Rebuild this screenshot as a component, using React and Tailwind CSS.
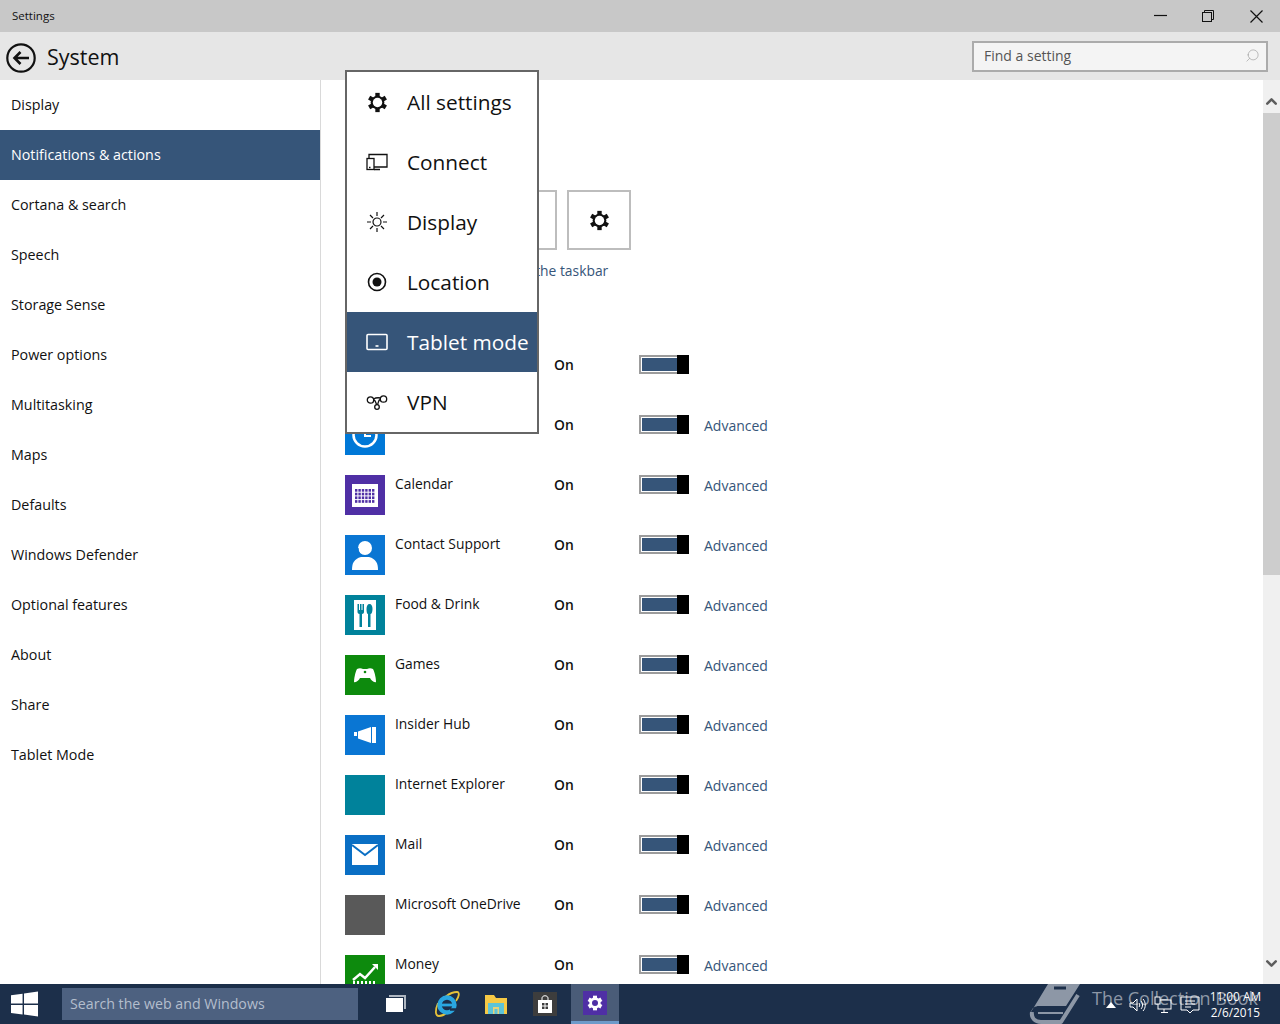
import { ChevronUp, ChevronDown, Search } from "lucide-react";

const sideItems = [
  "Display", "Notifications & actions", "Cortana & search", "Speech", "Storage Sense", "Power options",
  "Multitasking", "Maps", "Defaults", "Windows Defender", "Optional features", "About", "Share", "Tablet Mode",
];

const Gear = ({ size = 20, color = "currentColor" }) => (
  <svg width={size} height={size} viewBox="0 0 24 24" fill="none">
    {[0, 60, 120].map((a) => (
      <rect key={a} x="9.500" y="1" width="5" height="22" fill={color} transform={`rotate(${a} 12 12)`} />
    ))}
    <circle cx="12" cy="12" r="7.800" fill={color} />
    <circle cx="12" cy="12" r="5.400" fill="#fff" />
  </svg>
);

const ConnectIcon = () => (
  <svg width="22" height="18" viewBox="0 0 22 18" fill="none" stroke="currentColor" strokeWidth="1.300">
    <path d="M3 5V1.500h18v12.500H8" />
    <rect x="1" y="5.500" width="7" height="11" fill="#fff" />
    <path d="M8 16.500h6M3 14.500h1.500" />
  </svg>
);

const SunIcon = () => (
  <svg width="22" height="22" viewBox="0 0 22 22" fill="none" stroke="currentColor" strokeWidth="1.200">
    <circle cx="11" cy="11" r="4" />
    <path d="M11 1v4M11 17v4M1 11h4M17 11h4M4 4l3 3M15 15l3 3M18 4l-3 3M7 15l-3 3" />
  </svg>
);

const LocationIcon = () => (
  <svg width="20" height="20" viewBox="0 0 20 20" fill="none">
    <circle cx="10" cy="10" r="8.500" stroke="currentColor" strokeWidth="1.600" />
    <circle cx="10" cy="10" r="4.500" fill="currentColor" />
  </svg>
);

const TabletIcon = () => (
  <svg width="22" height="18" viewBox="0 0 22 18" fill="none" stroke="currentColor" strokeWidth="1.600">
    <rect x="1" y="1.500" width="20" height="15" rx="1" />
    <path d="M9.500 13h3" />
  </svg>
);

const VpnIcon = () => (
  <svg width="22" height="18" viewBox="0 0 22 18" fill="none" stroke="currentColor" strokeWidth="1.300">
    <circle cx="4.500" cy="7" r="3.200" />
    <circle cx="17.500" cy="6" r="3.200" />
    <circle cx="11" cy="14" r="2.300" />
    <path d="M7.700 7C10 7 9.500 11 11 11.700M14.300 6.500C12 7 12.500 10 11.500 11.700M7.500 6C10 4.500 12 4.500 14.500 5" />
  </svg>
);

const flyoutItems = [
  { label: "All settings", icon: <Gear size={21} color="#111" /> },
  { label: "Connect", icon: <ConnectIcon /> },
  { label: "Display", icon: <SunIcon /> },
  { label: "Location", icon: <LocationIcon /> },
  { label: "Tablet mode", icon: <TabletIcon />, active: true },
  { label: "VPN", icon: <VpnIcon /> },
];

const AppGlyph = ({ children }) => (
  <svg width="40" height="40" viewBox="0 0 40 40" fill="#fff">
    {children}
  </svg>
);

const apps = [
  {
    name: "Alarms & Clock", bg: "bg-[#0078d7]", glyph: (
      <AppGlyph>
        <circle cx="20" cy="20" r="11.500" fill="none" stroke="#fff" strokeWidth="2.500" />
        <path d="M20 12v9h6" fill="none" stroke="#fff" strokeWidth="2" />
      </AppGlyph>
    ),
  },
  {
    name: "Calendar", bg: "bg-[#4f2fa5]", glyph: (
      <AppGlyph>
        <rect x="7" y="9" width="26" height="23" />
        {[0, 1, 2, 3].map((r) =>
          [0, 1, 2, 3, 4, 5].map((c) => (
            <rect key={`${r}-${c}`} x={10 + c * 3.4} y={14 + r * 3.7} width="2.400" height="2.700" fill="#4f2fa5" />
          ))
        )}
      </AppGlyph>
    ),
  },
  {
    name: "Contact Support", bg: "bg-[#0a76d3]", glyph: (
      <AppGlyph>
        <circle cx="20" cy="13" r="7" />
        <path d="M7 35c0-7 2-11 9-13h8c7 2 9 6 9 13z" />
        <path d="M13 13c0 5 3 8 7 8" fill="none" stroke="#0a76d3" strokeWidth="1.200" />
      </AppGlyph>
    ),
  },
  {
    name: "Food & Drink", bg: "bg-[#00829b]", glyph: (
      <AppGlyph>
        <rect x="9" y="5" width="22" height="30" />
        <path d="M12.500 9H14v6h1V9h1.500v6h1V9H19v8c0 1-1 2-2 2v13h-2.500V19c-1 0-2-1-2-2z" fill="#00829b" />
        <path d="M24.500 9c2 0 3 2 3 5s-1 5-2 5v13H23V19c-1 0-1.500-2-1.500-5s1-5 3-5z" fill="#00829b" />
      </AppGlyph>
    ),
  },
  {
    name: "Games", bg: "bg-[#0d8a0d]", glyph: (
      <AppGlyph>
        <path d="M12 14c2-1 4-1 6 0h4c2-1 4-1 6 0 2 4 3 10 3 13-2 1-5-2-6-4H15c-1 2-4 5-6 4 0-3 1-9 3-13z" />
        <circle cx="20" cy="17" r="1.300" fill="#0d8a0d" />
      </AppGlyph>
    ),
  },
  {
    name: "Insider Hub", bg: "bg-[#0a76d3]", glyph: (
      <AppGlyph>
        <path d="M9 17h3v4H9zM13 16.500L26 12v16l-13-4.500zM27 12h4v16h-4z" />
      </AppGlyph>
    ),
  },
  { name: "Internet Explorer", bg: "bg-[#00829b]", glyph: null },
  {
    name: "Mail", bg: "bg-[#0a6fc4]", glyph: (
      <AppGlyph>
        <rect x="7" y="9" width="26" height="21" />
        <path d="M7 10l13 10 13-10" fill="none" stroke="#0a6fc4" strokeWidth="2" />
      </AppGlyph>
    ),
  },
  { name: "Microsoft OneDrive", bg: "bg-[#595959]", glyph: null },
  {
    name: "Money", bg: "bg-[#0d8a0d]", glyph: (
      <AppGlyph>
        <path d="M8 25l7-6 5 4 10-11" fill="none" stroke="#fff" strokeWidth="2.500" />
        <path d="M27 9h6v6z" />
        {[8, 12, 16, 20, 24, 28].map((x) => (
          <rect key={x} x={x} y="26" width="2" height="14" />
        ))}
      </AppGlyph>
    ),
  },
];

const Toggle = () => (
  <div className="flex h-[19px] w-[50px]">
    <div className="flex-1 border-2 border-r-0 border-[#9c9c9c]">
      <div className="h-full border border-r-0 border-white bg-[#365579]" />
    </div>
    <div className="w-3 bg-black" />
  </div>
);

const WinLogo = () => (
  <svg width="28" height="26" viewBox="0 0 28 26" fill="#fff">
    <path d="M0 4l12-1.700v10.200H0zM13.500 2L28 0v12.500H13.500zM0 14h12v10L0 22.300zM13.500 14H28v12l-14.500-2z" />
  </svg>
);

const IeLogo = () => (
  <svg width="26" height="26" viewBox="0 0 26 26" fill="none">
    <path d="M5 15C8 7 16 1 23 1c3 0 2 5-1 9" stroke="#e6c23a" strokeWidth="1.800" />
    <path d="M4 12C1 19 1 25 5 25c2 0 5-1 7-3" stroke="#e6c23a" strokeWidth="1.800" />
    <circle cx="13" cy="14" r="7.500" stroke="#2aa7e0" strokeWidth="4.400" />
    <path d="M6 14h15" stroke="#2aa7e0" strokeWidth="2.800" />
    <path d="M16 18.500h7" stroke="#1c2f4a" strokeWidth="2.500" />
  </svg>
);

const FolderIcon = () => (
  <svg width="22" height="20" viewBox="0 0 22 20">
    <path d="M0 1h9l2 3h11v16H0z" fill="#f6c945" />
    <path d="M3 9h16v11H3z" fill="#5ec4d8" />
    <path d="M8 13h6v7H8z" fill="#e9d27a" />
    <path d="M9.500 15h3v5h-3z" fill="#5ec4d8" />
  </svg>
);

const StoreIcon = () => (
  <svg width="14" height="18" viewBox="0 0 14 18" fill="#fff">
    <path d="M4 5V3c0-3 6-3 6 0v2" fill="none" stroke="#fff" strokeWidth="1" />
    <path d="M0 5h14v13H0z" />
    <path d="M4 8h2.500v2.500H4zM7.500 8H10v2.500H7.500zM4 11.500h2.500V14H4zM7.500 11.500H10V14H7.500z" fill="#3d3d3d" />
  </svg>
);

const BookMark = () => (
  <svg width="52" height="40" viewBox="0 0 52 40" fill="none">
    <path d="M19 0h32L37 22H10c-4 0-7 2-8 6z" fill="#8d97a6" />
    <path d="M25 4h12" stroke="#1c2f4a" strokeWidth="3" />
    <path d="M3 28c-1 6 3 10 9 10h20l17-27" stroke="#8d97a6" strokeWidth="4" strokeLinejoin="round" />
    <path d="M9 29h25" stroke="#8d97a6" strokeWidth="2" />
  </svg>
);

const App = () => {
  return (
    <div className="relative flex h-screen flex-col overflow-hidden bg-white font-['Open_Sans',sans-serif] text-[14.300px] text-[#111]">
      {/* Title bar */}
      <div className="flex h-8 shrink-0 items-center bg-[#c8c8c8] pl-3 text-[11.500px]">
        <span className="flex-1">Settings</span>
        <div className="flex w-12 justify-center">
          <svg width="13" height="13" viewBox="0 0 13 13" stroke="#111" strokeWidth="1.200">
            <path d="M0 5.500h13" />
          </svg>
        </div>
        <div className="flex w-12 justify-center">
          <svg width="12" height="12" viewBox="0 0 12 12" fill="none" stroke="#111" strokeWidth="1">
            <rect x=".5" y="2.500" width="9" height="9" />
            <path d="M2.500 2.500V.5h9v9h-2" />
          </svg>
        </div>
        <div className="flex w-12 justify-center">
          <svg width="13" height="13" viewBox="0 0 13 13" stroke="#111" strokeWidth="1.200">
            <path d="M.5.500l12 12M12.500.5l-12 12" />
          </svg>
        </div>
      </div>

      {/* Header */}
      <div className="flex h-12 shrink-0 items-center bg-[#e6e6e6] pl-[6px] pr-3">
        <svg width="30" height="30" viewBox="0 0 30 30" fill="none" stroke="#111" className="mt-[4px]">
          <circle cx="15" cy="15" r="13.700" strokeWidth="2.200" />
          <path d="M23 15H9M14.500 9l-6 6 6 6" strokeWidth="2.600" />
        </svg>
        <span className="ml-[11px] mt-[2px] flex-1 text-[21.500px]">System</span>
        <div className="flex h-[31px] w-[296px] items-center justify-between border-2 border-[#ababab] bg-[#f4f4f4] pb-px pl-[10px] pr-[6px] text-[14px] text-[#555]">
          <span>Find a setting</span>
          <Search size={15} strokeWidth={1} className="-scale-x-100 text-[#999]" />
        </div>
      </div>

      {/* Body */}
      <div className="flex min-h-0 flex-1">
        <div className="w-[321px] shrink-0 border-r border-[#d9d9d9]">
          {sideItems.map((item) => (
            <div
              key={item}
              className={`flex h-[50px] items-center pb-px pl-[11px] ${
                item === "Notifications & actions" ? "bg-[#365579] text-white" : ""
              }`}
            >
              {item}
            </div>
          ))}
        </div>

        <div className="min-w-0 flex-1 overflow-hidden pl-6 pt-[110px] text-[13.850px]">
          <div className="flex gap-[10px]">
            {[0, 1, 2, 3].map((i) => (
              <div key={i} className="flex h-[60px] w-[64px] items-center justify-center border-2 border-[#bdbdbd]">
                {i === 3 && <Gear size={21} color="#111" />}
              </div>
            ))}
          </div>
          <div className="mt-[11px] h-5 text-[#365579]">Select which icons appear on the taskbar</div>

          <div className="mt-[74px]">
            <div className="flex h-[60px] items-start">
              <div className="w-10" />
              <span className="ml-[10px] w-[159px]" />
              <span className="w-[85px] font-semibold leading-[19px]">On</span>
              <Toggle />
            </div>
            {apps.map((app) => (
              <div key={app.name} className="flex h-[60px] items-start">
                <div className={`h-10 w-10 shrink-0 ${app.bg}`}>{app.glyph}</div>
                <span className="ml-[10px] w-[159px] leading-[18px]">{app.name}</span>
                <span className="w-[85px] font-semibold leading-[19px]">On</span>
                <Toggle />
                <span className="ml-[15px] mt-px text-[14px] leading-5 text-[#365579]">Advanced</span>
              </div>
            ))}
          </div>
        </div>

        {/* Scrollbar */}
        <div className="flex w-[17px] shrink-0 flex-col bg-[#f0f0f0]">
          <div className="flex h-[33px] items-center justify-center pt-[9px]">
            <ChevronUp size={17} strokeWidth={3.5} className="text-[#5d5d5d]" />
          </div>
          <div className="h-[462px] bg-[#cdcdcd]" />
          <div className="flex flex-1 items-end justify-center pb-[12px]">
            <ChevronDown size={17} strokeWidth={3.5} className="text-[#5d5d5d]" />
          </div>
        </div>
      </div>

      {/* Taskbar */}
      <div className="flex h-10 shrink-0 items-center bg-[#1c2f4a] text-white">
        <div className="ml-[11px] flex w-[27px] justify-center">
          <WinLogo />
        </div>
        <div className="ml-6 flex h-8 w-[296px] items-center bg-[#4d6180] pl-2 text-[14.200px] text-[#b4becd]">
          Search the web and Windows
        </div>
        <div className="ml-[27px] flex w-[22px] justify-center">
          <svg width="22" height="20" viewBox="0 0 22 20">
            <path d="M4 1h17v14h-2V3H4z" fill="#aeb6c1" />
            <path d="M1 4h17v14H1z" fill="#fff" />
          </svg>
        </div>
        <div className="ml-[27px] flex w-[26px] justify-center">
          <IeLogo />
        </div>
        <div className="ml-[25px] flex w-[22px] justify-center">
          <FolderIcon />
        </div>
        <div className="ml-[26px] flex h-6 w-6 items-center justify-center bg-[#3d3d3d]">
          <StoreIcon />
        </div>
        <div className="ml-[14px] flex h-10 w-12 items-center justify-center border-b-[3px] border-[#6d9ac9] bg-[#4a5c78]">
          <div className="flex h-6 w-6 items-center justify-center bg-[#4f2fa5] text-white">
            <svg width="16" height="16" viewBox="0 0 24 24">
              {[0, 60, 120].map((a) => (
                <rect key={a} x="9" y="1" width="6" height="22" fill="#fff" transform={`rotate(${a} 12 12)`} />
              ))}
              <circle cx="12" cy="12" r="8.500" fill="#fff" />
              <circle cx="12" cy="12" r="4.500" fill="#4f2fa5" />
            </svg>
          </div>
        </div>
        <div className="flex-1" />
        <div className="relative z-20 mr-[19px] text-center text-[11.800px] leading-4">
          <div>11:00 AM</div>
          <div>2/6/2015</div>
        </div>
      </div>

      {/* Flyout */}
      <div className="absolute left-[345px] top-[70px] z-10 w-[194px] border-2 border-[#666] bg-white text-[20.800px]">
        {flyoutItems.map((f) => (
          <div
            key={f.label}
            className={`flex h-[60px] items-center ${f.active ? "bg-[#365579] text-white" : "text-[#111]"}`}
          >
            <div className="ml-[18px] flex w-[24px] justify-center">{f.icon}</div>
            <span className="ml-[18px] mt-[2px] whitespace-nowrap">{f.label}</span>
          </div>
        ))}
      </div>

      {/* Watermark over the taskbar */}
      <div className="absolute bottom-0 left-[1029px] z-10 flex items-center">
        <BookMark />
      </div>
      <span className="absolute bottom-[12px] left-[1092px] z-10 whitespace-nowrap text-[18px] text-[#8d97a6]">
        The Collection Book
      </span>

      {/* Tray over the watermark */}
      <div className="absolute bottom-[10px] left-[1106px] z-20 flex items-center text-white">
        <svg width="10" height="6" viewBox="0 0 10 6" fill="#fff" className="mr-[13px]">
          <path d="M5 0l5 6H0z" />
        </svg>
        <svg width="18" height="18" viewBox="0 0 18 18" fill="none" stroke="#fff" strokeWidth="1" className="mr-[7px]">
          <path d="M1 7h3l4-4v12l-4-4H1zM10 7c1 1 1 3 0 4M12 5c2 2 2 6 0 8M14 3c3 3 3 9 0 12" />
        </svg>
        <svg width="18" height="18" viewBox="0 0 18 18" fill="none" stroke="#fff" strokeWidth="1" className="mr-[8px]">
          <rect x="4" y="4" width="13" height="9" />
          <rect x="1" y="1" width="5" height="7" fill="#1c2f4a" />
          <path d="M10 13v3M7 16.500h7" />
        </svg>
        <svg width="20" height="18" viewBox="0 0 20 18" fill="none" stroke="#fff" strokeWidth="1">
          <path d="M1 1h18v13h-6l-3 3-3-3H1zM5 5h10M5 8h10M5 11h6" />
        </svg>
      </div>
    </div>
  );
};

export default App;
